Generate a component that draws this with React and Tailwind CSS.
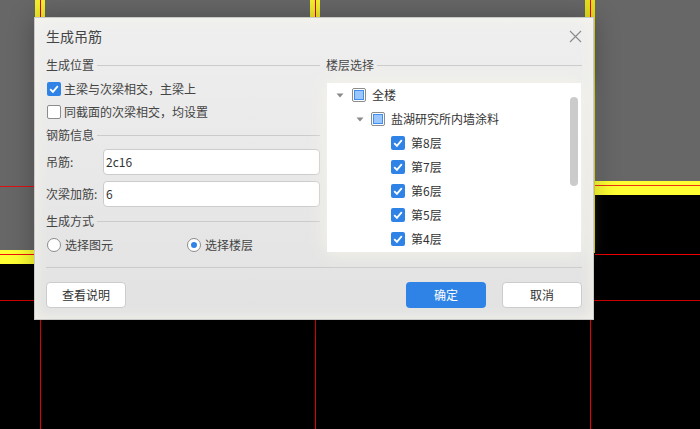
const font = { fontFamily: '"Noto Sans CJK SC", "Noto Sans", sans-serif' };

function Check() {
  return (
    <span className="flex h-[14px] w-[14px] shrink-0 items-center justify-center rounded-[2px] bg-[#2f83e6]">
      <svg width="12" height="12" viewBox="0 0 12 12" fill="none">
        <path d="M2.2 6.2 L4.9 8.9 L9.8 3.2" stroke="white" strokeWidth="1.8" />
      </svg>
    </span>
  );
}

function Empty() {
  return <span className="h-[14px] w-[14px] shrink-0 rounded-[2px] border border-[#8c8c8c] bg-white" />;
}

function Mixed() {
  return (
    <span className="flex h-[14px] w-[14px] shrink-0 items-center justify-center rounded-[2px] border border-[#8c8c8c] bg-white">
      <span className="h-[10px] w-[10px] border border-[#3f8ef0] bg-[#9ac7fd]" />
    </span>
  );
}

function Arrow() {
  return (
    <svg width="8" height="5" viewBox="0 0 8 5" className="shrink-0">
      <path d="M0.5 0.5 H7.5 L4 4.5 Z" fill="#8a8a8a" />
    </svg>
  );
}

function Section({ title }) {
  return (
    <div className="flex h-6 items-center gap-[3px] text-[12px] text-[#444]">
      <span className="shrink-0">{title}</span>
      <span className="h-px flex-1 bg-[#cbcbcb]" />
    </div>
  );
}

function Field({ label, value }) {
  return (
    <div className="flex h-[26px] items-center">
      <span className="w-[57px] shrink-0 whitespace-nowrap text-[12px] text-[#444]">{label}</span>
      <div className="flex h-[26px] flex-1 items-center rounded-[4px] border border-[#cccccc] bg-white pl-[2px] text-[12px] text-[#333]">
        {value}
      </div>
    </div>
  );
}

function Radio({ label, on, className = "" }) {
  return (
    <div className={`flex items-center gap-1 ${className}`}>
      <span className="flex h-[14px] w-[14px] items-center justify-center rounded-full border border-[#8c8c8c] bg-white">
        {on && <span className="h-[6px] w-[6px] rounded-full bg-[#2f83e6]" />}
      </span>
      <span>{label}</span>
    </div>
  );
}

function Btn({ children, primary, className = "" }) {
  return (
    <button
      className={
        "flex h-[26px] w-20 items-center justify-center rounded-[4px] text-[12px] " +
        (primary ? "bg-[#2f83e6] text-white " : "border border-[#cccccc] bg-white text-[#333] ") +
        className
      }
    >
      {children}
    </button>
  );
}

function Canvas() {
  return (
    <div className="absolute inset-0 bg-black">
      {/* grey slabs */}
      <div className="absolute left-0 top-0 h-[250px] w-[40px] bg-[#676767]" />
      <div className="absolute left-[595px] top-0 h-[181px] w-[105px] bg-[#676767]" />
      <div className="absolute left-[40px] top-0 h-[181px] w-[555px] bg-[#676767]" />
      {/* yellow bands */}
      <div className="absolute left-0 top-[250px] h-[14px] w-[40px] bg-[#ffff33]" />
      <div className="absolute left-[595px] top-[181px] h-[14px] w-[105px] bg-[#ffff33]" />
      <div className="absolute left-[35px] top-0 h-[60px] w-[10px] bg-[#f4f02e]" />
      <div className="absolute left-[310px] top-0 h-[60px] w-[10px] bg-[#f4f02e]" />
      <div className="absolute left-[585px] top-0 h-[253px] w-[10px] bg-[#e6e01e]" />
      {/* red lines */}
      <div className="absolute left-0 top-[186px] h-px w-[40px] bg-[#e01010]" />
      <div className="absolute left-[595px] top-[185px] h-px w-[105px] bg-[#ee3311]" />
      <div className="absolute left-0 top-[254px] h-px w-[40px] bg-[#f01010]" />
      <div className="absolute left-[595px] top-[254px] h-px w-[105px] bg-[#f00000]" />
      <div className="absolute left-0 top-[300px] h-px w-[700px] bg-[#d00000]" />
      <div className="absolute left-[40px] top-0 h-[429px] w-px bg-[#e00000]" />
      <div className="absolute left-[315px] top-0 h-[429px] w-px bg-[#e00000]" />
      <div className="absolute left-[590px] top-0 h-[429px] w-px bg-[#f00000]" />
    </div>
  );
}

const floors = ["第8层", "第7层", "第6层", "第5层", "第4层"];

export default function App() {
  return (
    <div className="relative h-[429px] w-[700px] overflow-hidden bg-black" style={font}>
      <Canvas />
      <div className="absolute left-[34px] top-[17px] flex h-[303px] w-[560px] flex-col border border-[#c9c9c9] bg-gradient-to-b from-[#efefef] to-[#e2e2e2] px-[11px] shadow-[inset_0_0_14px_#f6f4ea,0_0_24px_rgba(0,0,0,0.28)]">
        <div className="flex h-[35px] shrink-0 items-center justify-between pt-[2px]">
          <span className="text-[14px] text-[#444]">生成吊筋</span>
          <svg width="13" height="13" viewBox="0 0 13 13" fill="none">
            <path d="M1 1 L12 12 M12 1 L1 12" stroke="#8a8a8a" strokeWidth="1.1" />
          </svg>
        </div>

        <div className="flex h-[214px] shrink-0 gap-[6px]">
          <div className="flex w-[274px] shrink-0 flex-col">
            <Section title="生成位置" />
            <div className="flex h-[23px] items-center gap-[3px] pl-px text-[12px] text-[#444]">
              <Check />
              <span>{"主梁与次梁相交\uFF0C主梁上"}</span>
            </div>
            <div className="flex h-[23px] items-center gap-[3px] pl-px text-[12px] text-[#444]">
              <Empty />
              <span>{"同截面的次梁相交\uFF0C均设置"}</span>
            </div>
            <Section title="钢筋信息" />
            <div className="mt-[2px] flex flex-col gap-[6px]">
              <Field label="吊筋:" value="2c16" />
              <Field label="次梁加筋:" value="6" />
            </div>
            <div className="mt-[2px]">
              <Section title="生成方式" />
            </div>
            <div className="flex h-[23px] items-center pl-px text-[12px] text-[#444]">
              <Radio label="选择图元" className="w-[140px]" />
              <Radio label="选择楼层" on />
            </div>
          </div>

          <div className="flex w-[256px] shrink-0 flex-col">
            <Section title="楼层选择" />
            <div className="relative ml-px mt-[6px] h-[169px] w-[254px] overflow-hidden bg-white text-[12px] text-[#333] shadow-[0_0_18px_#f6f4e8]">
              <div className="flex h-6 items-center pl-[9px]">
                <Arrow />
                <span className="ml-2">
                  <Mixed />
                </span>
                <span className="ml-[6px]">全楼</span>
              </div>
              <div className="flex h-6 items-center pl-[29px]">
                <Arrow />
                <span className="ml-[7px]">
                  <Mixed />
                </span>
                <span className="ml-[6px]">盐湖研究所内墙涂料</span>
              </div>
              {floors.map((f) => (
                <div key={f} className="flex h-6 items-center gap-[6px] pl-[64px]">
                  <Check />
                  <span>{f}</span>
                </div>
              ))}
              <div className="absolute left-[243px] top-[14px] h-[89px] w-2 rounded-full bg-[#cbcbcb]" />
            </div>
          </div>
        </div>

        <div className="h-px shrink-0 bg-[#cbcbcb]" />

        <div className="mt-[14px] flex items-center">
          <Btn>查看说明</Btn>
          <Btn primary className="ml-auto">确定</Btn>
          <Btn className="ml-4">取消</Btn>
        </div>
      </div>
    </div>
  );
}
